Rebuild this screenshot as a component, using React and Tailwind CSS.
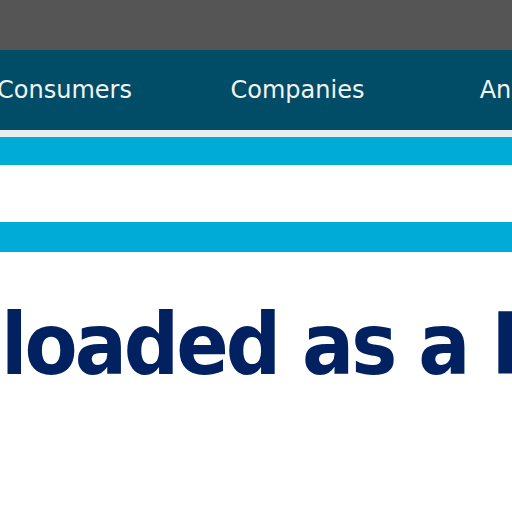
import React from 'react';

const navItems = ['Consumers', 'Companies', 'Analysts'];

function App() {
  return (
    <div className="w-[512px] h-[512px] overflow-hidden bg-white" style={{ fontFamily: '"DejaVu Sans", Verdana, sans-serif' }}>
      <div className="h-[50px] bg-[#555555]" />
      <nav className="h-[80px] bg-[#014c66] flex items-center overflow-hidden">
        <ul className="flex ml-[-52px] whitespace-nowrap">
          {navItems.map((item) => (
            <li key={item} className="w-[233px] shrink-0 text-center text-[24px] text-[#f2f4f2] leading-none">
              {item}
            </li>
          ))}
        </ul>
      </nav>
      <div className="h-[7px] bg-[#e8eeee]" />
      <div className="h-[28px] bg-[#00acd7]" />
      <div className="h-[57px] bg-white" />
      <div className="h-[30px] bg-[#00acd7]" />
      <h1 className="mt-[49px] pl-[1px] whitespace-nowrap text-[86px] font-bold leading-none tracking-[-3px] font-stretch-condensed text-[#012160]">
        loaded as a PDF
      </h1>
    </div>
  );
}

export default App;
